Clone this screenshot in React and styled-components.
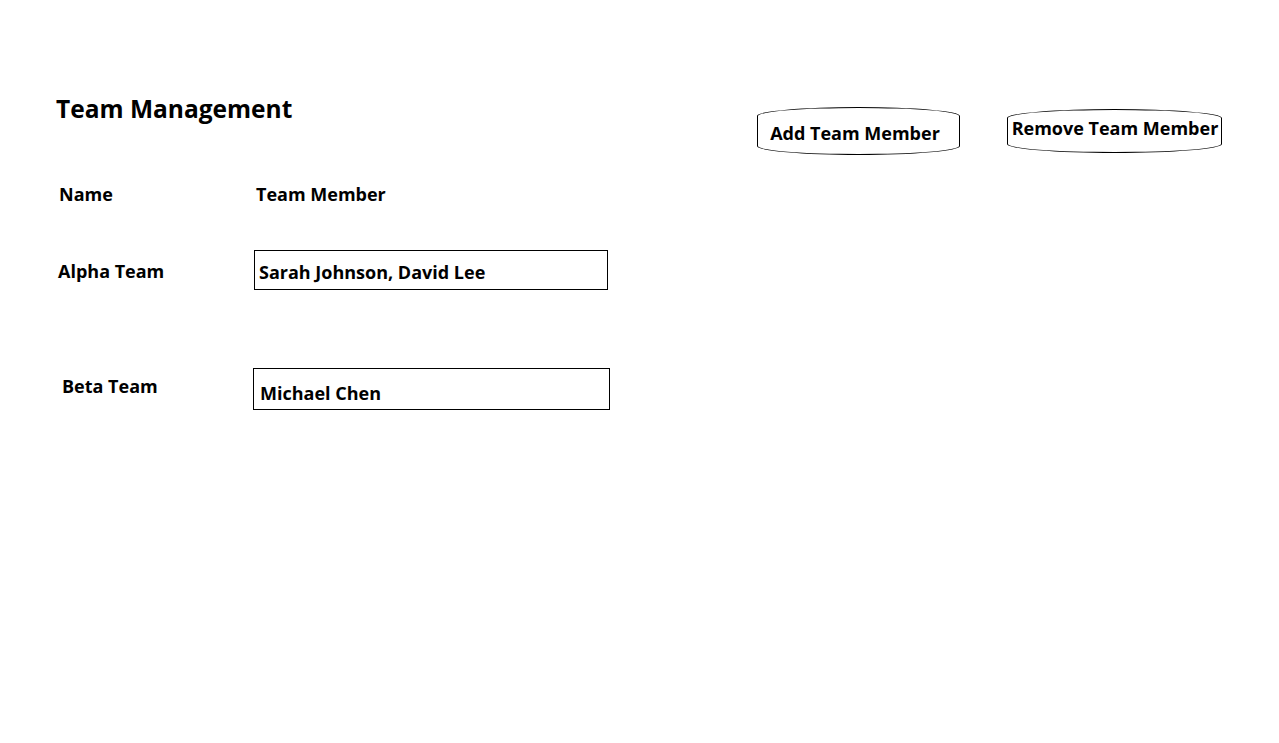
import React from "react";
import styled, { createGlobalStyle } from "styled-components";

const Global = createGlobalStyle`
  html, body { margin: 0; padding: 0; background: #fff; }
  body { font-family: "Open Sans", Lato, "Liberation Sans", sans-serif; color: #000; }
`;

const Page = styled.div`
  width: 1279px;
  height: 743px;
  box-sizing: border-box;
  padding: 94px 0 0 56px;
`;

const Header = styled.header`
  display: flex;
  align-items: flex-start;
`;

const Title = styled.h1`
  margin: 0;
  width: 701px;
  font-size: 24.5px;
  line-height: 29px;
  font-weight: 700;
`;

const Actions = styled.div`
  display: flex;
  align-items: flex-start;
  gap: 47px;
`;

const PillButton = styled.button`
  box-sizing: border-box;
  width: ${(p) => p.$w}px;
  height: ${(p) => p.$h}px;
  margin-top: ${(p) => p.$top}px;
  padding: ${(p) => p.$pad};
  border: 1px solid #000;
  border-radius: 50% / 9px;
  background: #fff;
  font-family: inherit;
  font-size: 18px;
  font-weight: 700;
  line-height: 22px;
  color: #000;
  display: flex;
  align-items: ${(p) => p.$align};
  justify-content: center;
  white-space: nowrap;
  cursor: pointer;
`;

const Table = styled.div`
  display: grid;
  grid-template-columns: 198px 360px;
  margin-top: 28px;
`;

const HeadCell = styled.div`
  font-size: 18px;
  font-weight: 700;
  line-height: 22px;
  padding-left: ${(p) => p.$pl || 0}px;
`;

const Label = styled.div`
  font-size: 18px;
  font-weight: 700;
  line-height: 22px;
  margin-top: ${(p) => p.$top}px;
  padding-left: ${(p) => p.$pl}px;
`;

const MemberBox = styled.div`
  box-sizing: border-box;
  width: ${(p) => p.$w}px;
  height: ${(p) => p.$h}px;
  margin-top: ${(p) => p.$top}px;
  margin-left: ${(p) => p.$ml}px;
  border: 1px solid #000;
  padding: ${(p) => p.$pad};
  font-size: 18px;
  font-weight: 700;
  line-height: 22px;
  white-space: nowrap;
`;

export default function App() {
  return (
    <>
      <Global />
      <Page>
        <Header>
          <Title>Team Management</Title>
          <Actions>
            <PillButton $w={203} $h={48} $top={13} $align="center" $pad="4px 7px 0 0">
              Add Team Member
            </PillButton>
            <PillButton $w={215} $h={44} $top={15} $align="flex-start" $pad="7px 0 0 1px">
              Remove Team Member
            </PillButton>
          </Actions>
        </Header>
        <Table>
          <HeadCell $pl={3}>Name</HeadCell>
          <HeadCell $pl={2}>Team Member</HeadCell>

          <Label $top={55} $pl={2}>Alpha Team</Label>
          <MemberBox $w={354} $h={40} $top={45} $ml={0} $pad="10px 0 0 4px">
            Sarah Johnson, David Lee
          </MemberBox>

          <Label $top={85} $pl={6}>Beta Team</Label>
          <MemberBox $w={357} $h={42} $top={78} $ml={-1} $pad="13px 0 0 6px">
            Michael Chen
          </MemberBox>
        </Table>
      </Page>
    </>
  );
}
